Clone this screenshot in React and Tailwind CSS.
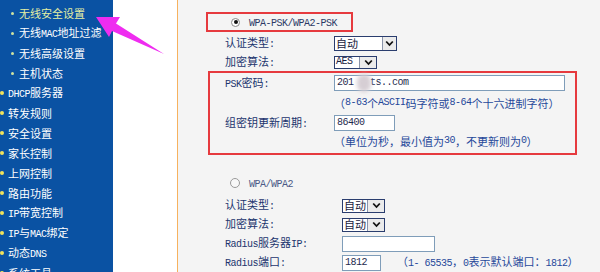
import React from "react";

const isAscii = (c) => c.charCodeAt(0) < 128;

function T({ children }) {
  const s = String(children);
  const runs = [];
  let cur = "";
  let curA = null;
  for (const ch of s) {
    const a = isAscii(ch);
    if (curA === null || a === curA) {
      cur += ch;
      curA = a;
    } else {
      runs.push([curA, cur]);
      cur = ch;
      curA = a;
    }
  }
  if (cur) runs.push([curA, cur]);
  return runs.map(([a, t], i) =>
    a ? (
      <span key={i} className="font-['Liberation_Mono',monospace] text-[10px] tracking-[-0.5px] whitespace-pre">
        {t}
      </span>
    ) : (
      <span key={i}>{t}</span>
    )
  );
}

const sideItems = [
  { t: "无线安全设置", sub: true, active: true },
  { t: "无线MAC地址过滤", sub: true },
  { t: "无线高级设置", sub: true },
  { t: "主机状态", sub: true },
  { t: "DHCP服务器" },
  { t: "转发规则" },
  { t: "安全设置" },
  { t: "家长控制" },
  { t: "上网控制" },
  { t: "路由功能" },
  { t: "IP带宽控制" },
  { t: "IP与MAC绑定" },
  { t: "动态DNS" },
  { t: "系统工具" },
];

function Chevron() {
  return (
    <svg width="9" height="7" viewBox="0 0 9 7">
      <path d="M1.2 1.5 L4.5 5 L7.8 1.5" fill="none" stroke="#111" strokeWidth="1.8" />
    </svg>
  );
}

function Select({ text, w, h, bw }) {
  return (
    <div
      className="flex border border-[#2a3d6e] bg-white items-stretch"
      style={{ width: w, height: h }}
    >
      <div className="flex-1 flex items-center pl-[1px] text-[#1a2240] overflow-hidden whitespace-nowrap">
        <T>{text}</T>
      </div>
      <div
        className="border-l border-[#8a94aa] bg-[#ebebeb] flex items-center justify-center"
        style={{ width: bw }}
      >
        <Chevron />
      </div>
    </div>
  );
}

function Input({ w, children, extra }) {
  return (
    <div
      className="relative h-[16px] border border-[#7f9db9] bg-white flex items-center pl-[2px] text-[#1f2b4e]"
      style={{ width: w }}
    >
      {children}
      {extra}
    </div>
  );
}

function Radio({ checked }) {
  return checked ? (
    <div className="w-[9px] h-[9px] rounded-full border border-[#8a8a8a] bg-white flex items-center justify-center">
      <div className="w-[4px] h-[4px] rounded-full bg-[#111]" />
    </div>
  ) : (
    <div className="w-[10px] h-[10px] rounded-full border border-[#9a9a9a] bg-[#f8f8f8]" />
  );
}

export default function App() {
  return (
    <div className="relative w-[600px] h-[272px] overflow-hidden flex font-['Noto_Sans_CJK_SC',sans-serif] text-[11px] leading-none">
      <aside className="w-[113px] shrink-0 bg-[#0a52a3] pt-[3px] text-white">
        {sideItems.map((it, i) =>
          it.sub ? (
            <div key={i} className="h-[20px] flex items-center pl-[11px]">
              <span className="w-[3px] h-[3px] rounded-full bg-[#cfe3a0]" />
              <span className={"ml-[5px] " + (it.active ? "text-[#e4efa4]" : "text-white")}>
                <T>{it.t}</T>
              </span>
            </div>
          ) : (
            <div key={i} className="h-[20px] flex items-center">
              <span className="w-[4px] h-[4px] rounded-full bg-[#f2e35a]" />
              <span className="ml-[4px]">
                <T>{it.t}</T>
              </span>
            </div>
          )
        )}
      </aside>
      <div className="w-[64px] shrink-0 bg-white" />
      <div className="w-px shrink-0 bg-[#f7b25e]" />
      <main className="flex-1 bg-[#f4f4f4] pt-[12px] text-[#1c356e]">
        <div className="ml-[28px] w-[147px] h-[20px] border-2 border-[#e63a3e] flex items-center pl-[23px]">
          <Radio checked />
          <span className="ml-[9px] text-[#2c3a66]">
            <T>WPA-PSK/WPA2-PSK</T>
          </span>
        </div>
        <div className="mt-[1px] h-[20px] flex items-center pl-[47px]">
          <div className="w-[109px]">
            <T>认证类型:</T>
          </div>
          <Select text="自动" w={63} h={15} bw={14} />
        </div>
        <div className="h-[18px] flex items-center pl-[47px]">
          <div className="w-[109px]">
            <T>加密算法:</T>
          </div>
          <Select text="AES" w={43} h={13} bw={17} />
        </div>

        <div className="ml-[30px] w-[369px] h-[84px] border-2 border-[#e63a3e] pl-[15px]">
          <div className="h-[20px] flex items-center">
            <div className="w-[109px]">
              <T>PSK密码:</T>
            </div>
            <Input
              w={231}
              extra={
                <div className="absolute left-[22px] top-[-2px] w-[14px] h-[18px] rounded-full bg-[#d6ced4] blur-[2px]" />
              }
            >
              <T>{"201   ts..com"}</T>
            </Input>
          </div>
          <div className="h-[20px] flex items-center pl-[109px] text-[#26489a]">
            <T>（8-63个ASCII码字符或8-64个十六进制字符）</T>
          </div>
          <div className="h-[20px] flex items-center">
            <div className="w-[109px]">
              <T>组密钥更新周期:</T>
            </div>
            <Input w={61}>
              <T>86400</T>
            </Input>
          </div>
          <div className="h-[16px] flex items-center pl-[109px] text-[#26489a]">
            <T>（单位为秒，最小值为30，不更新则为0）</T>
          </div>
        </div>

        <div className="mt-[20px] h-[16px] flex items-center pl-[52px]">
          <Radio />
          <span className="ml-[9px] text-[#4a5a86]">
            <T>WPA/WPA2</T>
          </span>
        </div>
        <div className="mt-[5px]">
          <div className="h-[19px] flex items-center pl-[47px]">
            <div className="w-[117px]">
              <T>认证类型:</T>
            </div>
            <Select text="自动" w={43} h={14} bw={17} />
          </div>
          <div className="h-[19px] flex items-center pl-[47px]">
            <div className="w-[117px]">
              <T>加密算法:</T>
            </div>
            <Select text="自动" w={43} h={14} bw={17} />
          </div>
          <div className="h-[19px] flex items-center pl-[47px]">
            <div className="w-[117px]">
              <T>Radius服务器IP:</T>
            </div>
            <Input w={93} />
          </div>
          <div className="h-[19px] flex items-center pl-[47px]">
            <div className="w-[117px]">
              <T>Radius端口:</T>
            </div>
            <Input w={39}>
              <T>1812</T>
            </Input>
            <span className="ml-[16px] text-[#26489a]">
              <T>（1- 65535，0表示默认端口：1812）</T>
            </span>
          </div>
        </div>
      </main>
      <svg
        className="absolute left-0 top-0 pointer-events-none"
        width="600"
        height="272"
        viewBox="0 0 600 272"
      >
        <polygon
          points="96,17 120,17 116,23.5 164,54 112,31 109,37"
          fill="#ef2cf0"
        />
      </svg>
    </div>
  );
}
